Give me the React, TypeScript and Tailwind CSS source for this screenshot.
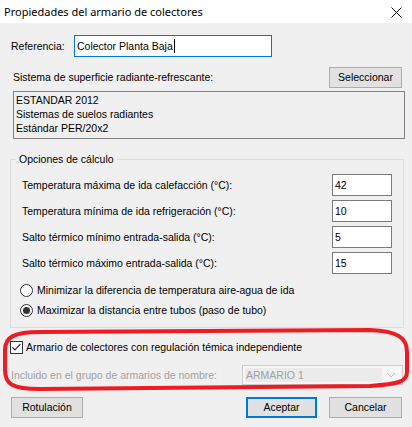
const fieldRows = [
  { label: "Temperatura máxima de ida calefacción (°C):", value: "42" },
  { label: "Temperatura mínima de ida refrigeración (°C):", value: "10" },
  { label: "Salto térmico mínimo entrada-salida (°C):", value: "5" },
  { label: "Salto térmico máximo entrada-salida (°C):", value: "15" },
];

function Radio({ checked, label }: { checked?: boolean; label: string }) {
  return (
    <div className="flex items-center h-[20px] pl-[9px] gap-[4px]">
      <span className="w-[13px] h-[13px] rounded-full border border-[#333333] bg-white flex items-center justify-center">
        {checked && <span className="w-[7px] h-[7px] rounded-full bg-[#333333]" />}
      </span>
      <span>{label}</span>
    </div>
  );
}

export default function App() {
  return (
    <div className="relative w-[412px] h-[427px] bg-[#f0f0f0] text-[10.5px] leading-[13px] text-black font-['Liberation_Sans',Arial,sans-serif] overflow-hidden">
      {/* title bar */}
      <div className="h-[23px] bg-white flex items-center justify-between pl-[4px] pr-[10px]">
        <span className="text-[11px] font-['Noto_Sans',sans-serif]">Propiedades del armario de colectores</span>
        <svg width="11" height="11" viewBox="0 0 11 11" className="mt-[1px]">
          <path d="M0.5 0.5 L10.5 10.5 M10.5 0.5 L0.5 10.5" stroke="#000" strokeWidth="1" />
        </svg>
      </div>

      <div className="mt-[12px] flex items-center h-[22px] pl-[11px]">
        <span className="w-[63px]">Referencia:</span>
        <div className="w-[198px] h-[22px] border border-[#0078d7] bg-white flex items-center pl-[2px]">
          Colector Planta Baja
          <span className="w-[1px] h-[14px] bg-black ml-[1px]" />
        </div>
      </div>

      <div className="mt-[10px] flex items-center justify-between h-[21px] pl-[13px] pr-[10px]">
        <span>Sistema de superficie radiante-refrescante:</span>
        <button className="w-[73px] h-[21px] bg-[#e1e1e1] border border-[#adadad]">Seleccionar</button>
      </div>

      <div className="mt-[3px] ml-[13px] w-[392px] h-[48px] border border-[#828282] pl-[2px] pt-[1px] leading-[14px]">
        <div>ESTANDAR 2012</div>
        <div>Sistemas de suelos radiantes</div>
        <div>Estándar PER/20x2</div>
      </div>

      <fieldset className="mt-[13px] ml-[10px] w-[394px] border border-[#dcdcdc] pb-[7px]">
        <legend className="ml-[5px] px-[3px] leading-[14px]">Opciones de cálculo</legend>
        <div className="mt-[8px] flex flex-col gap-[4px] px-[11px]">
          {fieldRows.map((r) => (
            <div key={r.value} className="flex items-center justify-between h-[22px]">
              <span>{r.label}</span>
              <div className="h-[22px] w-[60px] border border-[#7a7a7a] bg-white flex items-center pl-[2px]">
                {r.value}
              </div>
            </div>
          ))}
        </div>
        <div className="mt-[6px]">
          <Radio label="Minimizar la diferencia de temperatura aire-agua de ida" />
          <Radio checked label="Maximizar la distancia entre tubos (paso de tubo)" />
        </div>
      </fieldset>

      <div className="mt-[13px] flex items-center h-[13px] pl-[10px] gap-[3px]">
        <span className="w-[13px] h-[13px] border border-[#333333] bg-white flex items-center justify-center">
          <svg width="11" height="11" viewBox="0 0 11 11">
            <path d="M1.5 5.5 L4 8 L9.5 2" stroke="#333" strokeWidth="1.2" fill="none" />
          </svg>
        </span>
        <span>Armario de colectores con regulación témica independiente</span>
      </div>

      <div className="mt-[11px] flex items-center justify-between h-[20px] pl-[11px] pr-[9px]">
        <span className="text-[#a0a0a0]">Incluido en el grupo de armarios de nombre:</span>
        <div className="w-[161px] h-[20px] border border-[#cccccc] bg-[#f7f7f7] flex items-center p-[2px]">
          <div className="flex-1 h-full bg-[#ebebeb] flex items-center pl-[1px] text-[#a0a0a0]">ARMARIO 1</div>
          <svg width="18" height="14" viewBox="0 0 18 14">
            <path d="M5 5 L9 9 L13 5" stroke="#c0c0c0" strokeWidth="1" fill="none" />
          </svg>
        </div>
      </div>

      <div className="mt-[12px] flex items-center h-[21px] pl-[11px] pr-[10px]">
        <button className="w-[72px] h-[21px] bg-[#e1e1e1] border border-[#adadad]">Rotulación</button>
        <div className="flex-1" />
        <button className="w-[71px] h-[21px] bg-[#e1e1e1] border-2 border-[#0078d7]">Aceptar</button>
        <button className="ml-[12px] w-[73px] h-[21px] bg-[#e1e1e1] border border-[#adadad]">Cancelar</button>
      </div>

      {/* red highlight drawn over the dialog */}
      <svg className="absolute inset-0 pointer-events-none" width="412" height="427" viewBox="0 0 412 427">
        <path
          d="M40 332 L370 330 C398 331 407 338 407 352 L407 372 C407 382 398 384 370 386 L40 389 C12 389 5 384 5 370 L5 350 C5 337 14 332 40 332 Z"
          fill="none"
          stroke="#ed1c24"
          strokeWidth="4"
        />
      </svg>
    </div>
  );
}
